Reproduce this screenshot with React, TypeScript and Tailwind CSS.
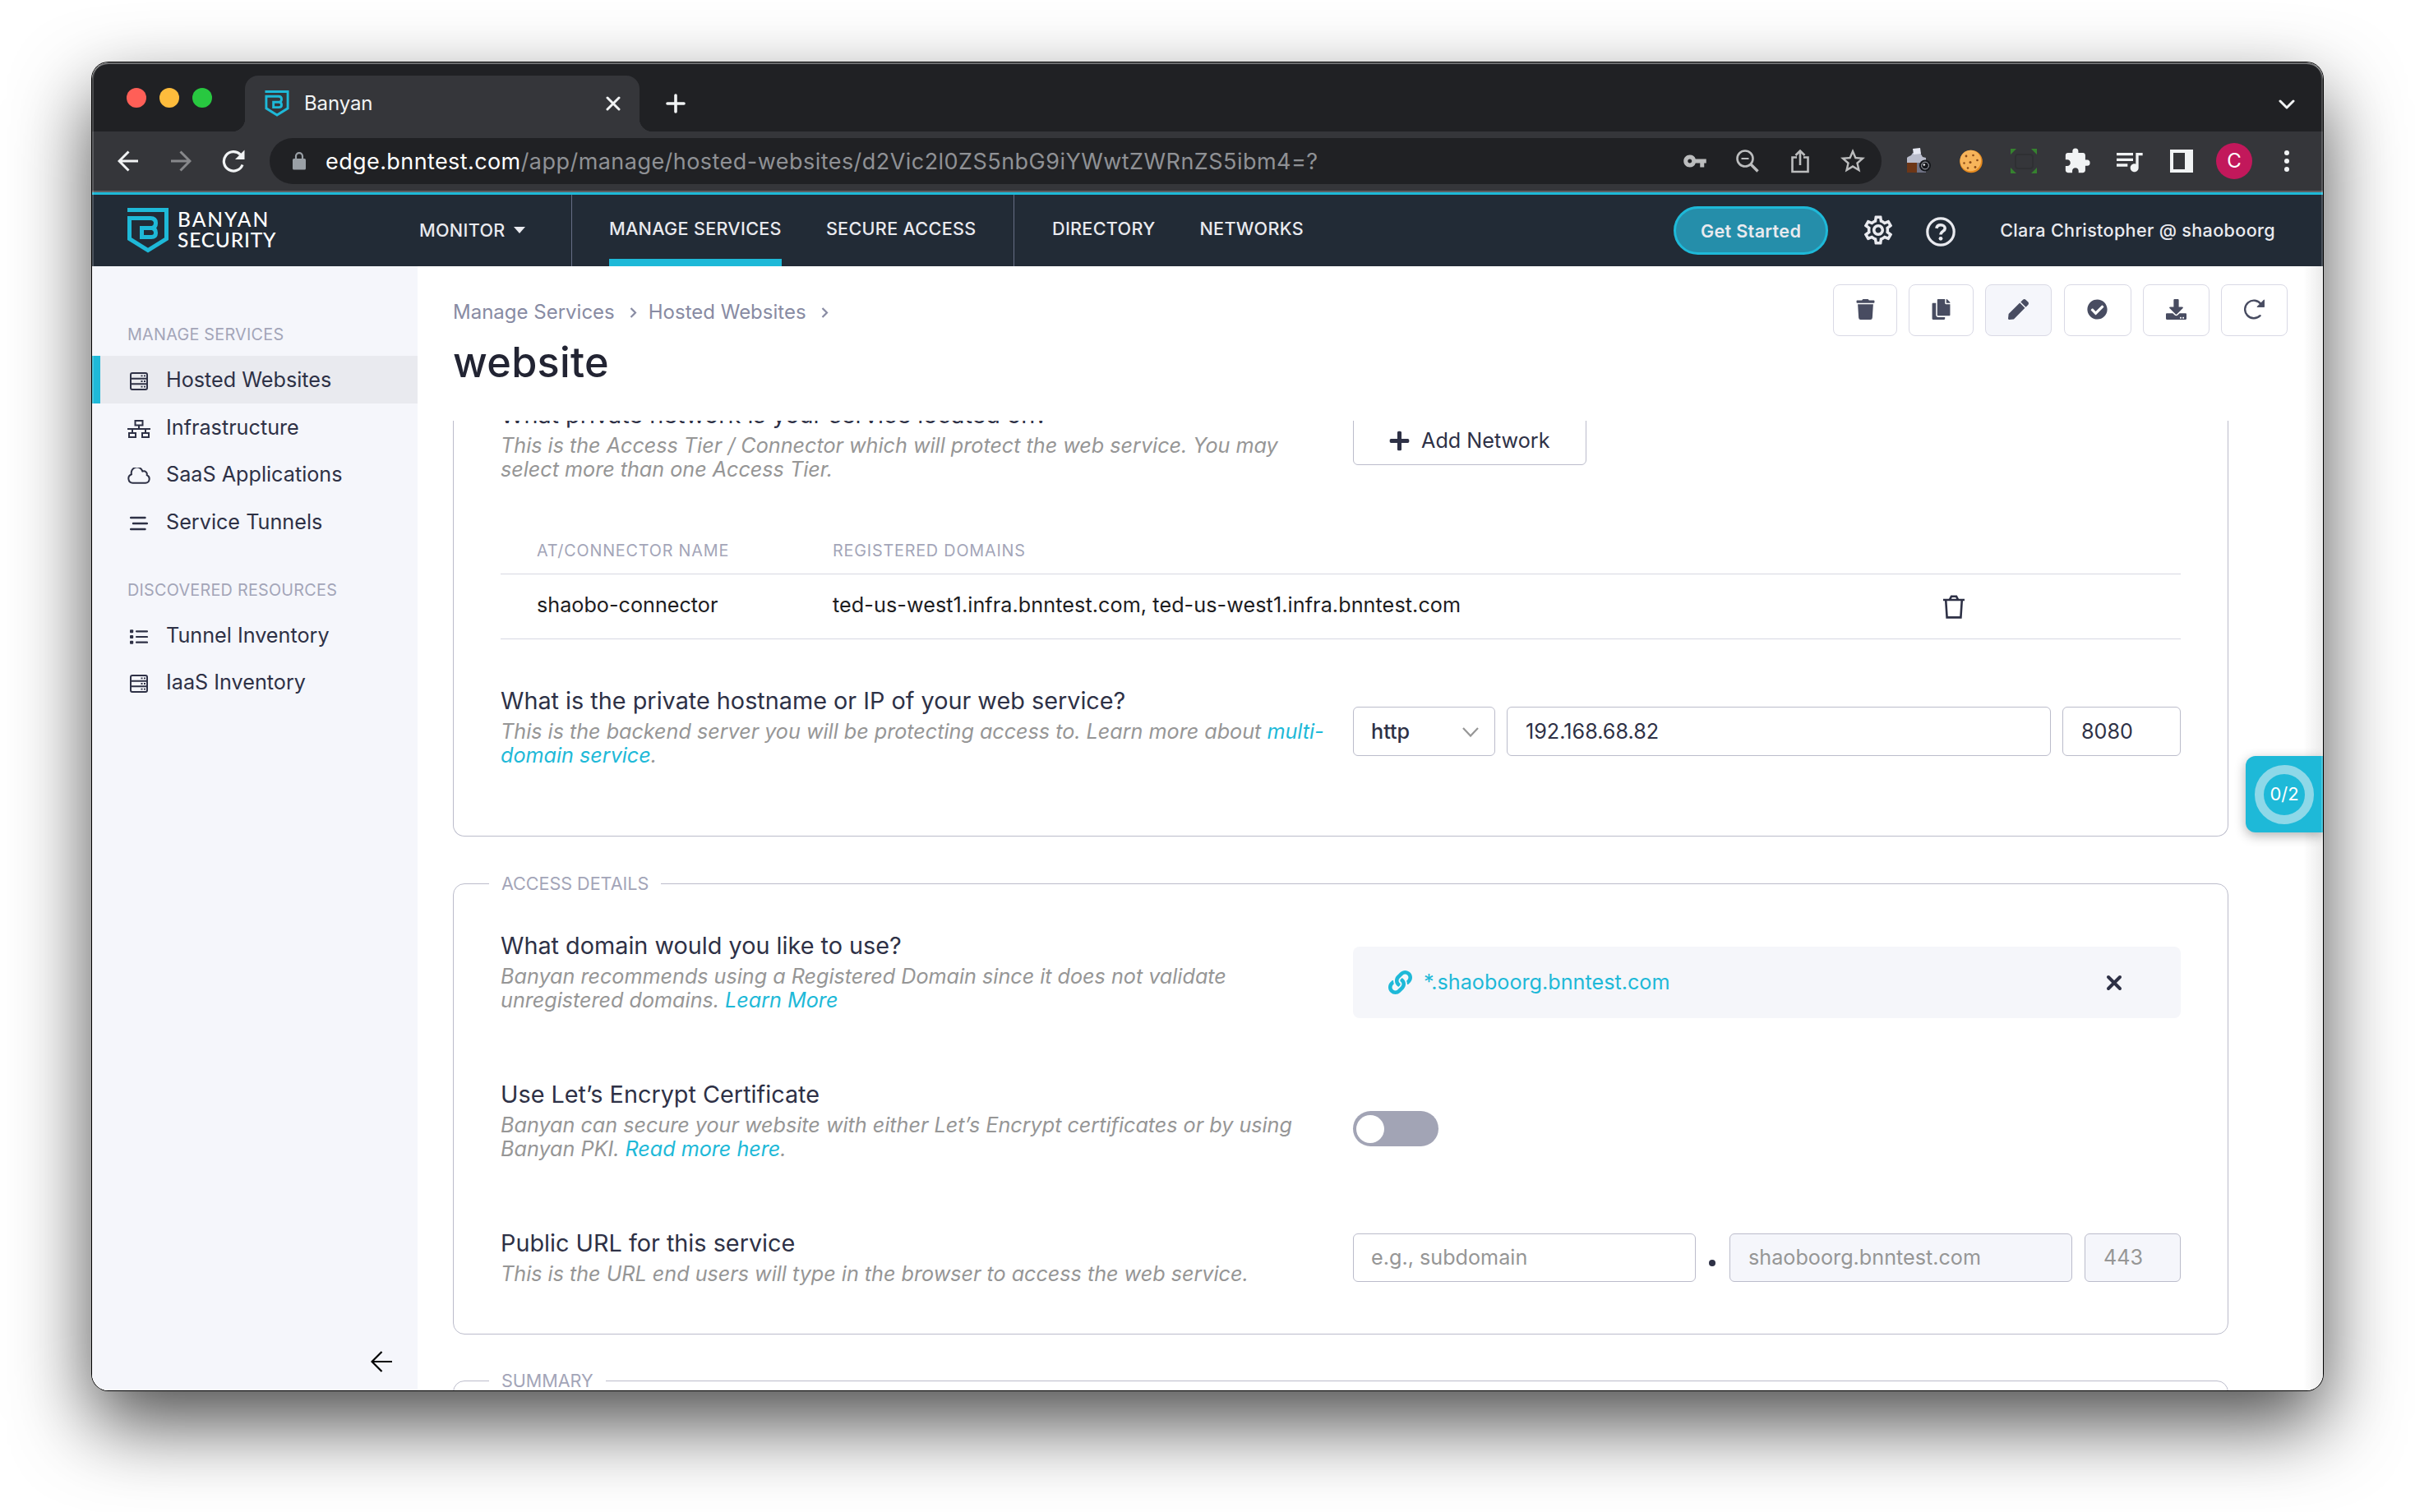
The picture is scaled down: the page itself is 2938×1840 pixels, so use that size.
import type { ReactNode } from "react";
import { FaCheckCircle, FaCopy, FaDownload, FaLink, FaPen, FaPlus, FaTrash } from "react-icons/fa";
import { MdExtension, MdOutlineSettings, MdQueueMusic, MdStarBorder, MdVpnKey } from "react-icons/md";

function Shield({ className }: { className: string }) {
  return (
    <svg viewBox="0 0 50 55" className={className} fill="none" stroke="#1eb9d8">
      <path d="M0 2.5H47.5V37.5L25 51.5L2.5 37.5V12.5H28Q34.5 12.5 34.5 18.5Q34.5 23.5 30 24.5Q34.5 25.5 34.5 30.5Q34.5 35.5 29 35.5H17.5V24.5H30" strokeWidth="5" />
    </svg>
  );
}

function ServerIcon() {
  return (
    <svg viewBox="0 0 22 22" className="size-[22px]" fill="none" stroke="#2e3146" strokeWidth="2">
      <rect x="1" y="1" width="20" height="20" rx="2" />
      <path d="M1 7.7H21M1 14.3H21" />
      <path d="M13.5 4.4H15.5M17 4.4H19M13.5 11H15.5M17 11H19M13.5 17.6H15.5M17 17.6H19" strokeWidth="1.8" />
    </svg>
  );
}

function NetworkIcon() {
  return (
    <svg viewBox="0 0 28 22" className="h-[22px] w-7" fill="none" stroke="#2e3146" strokeWidth="2">
      <path d="M9.5 1H18.5V6.5H9.5ZM2 16H10V21H2ZM18 16H26V21H18ZM0 11H28M14 6.5V11M6 11V16M22 11V16" />
    </svg>
  );
}

function CloudIcon() {
  return (
    <svg viewBox="0 0 28 20" className="h-5 w-7" fill="none" stroke="#2e3146" strokeWidth="2" strokeLinejoin="round">
      <path d="M6.5 18.8H22A5 5 0 0 0 23.6 9.2A3.8 3.8 0 0 0 18.3 4.6A6.9 6.9 0 0 0 5 8.3A5.4 5.4 0 0 0 6.5 18.8Z" />
    </svg>
  );
}

function TunnelIcon() {
  return (
    <svg viewBox="0 0 22 18" className="h-[18px] w-[22px]" stroke="#2e3146" strokeWidth="2.4" strokeLinecap="round">
      <path d="M1.1 2H18.5M4 9H20.9M1.1 16H18.5" />
    </svg>
  );
}

function ListIcon() {
  return (
    <svg viewBox="0 0 22 18" className="h-[18px] w-[22px]" fill="#2e3146" stroke="#2e3146">
      <path d="M8 2.3H21M8 9H21M8 15.7H21" strokeWidth="2.2" strokeLinecap="round" />
      <rect x="0" y="0.3" width="4.2" height="4" rx="1" stroke="none" />
      <rect x="0" y="7" width="4.2" height="4" rx="1" stroke="none" />
      <rect x="0" y="13.7" width="4.2" height="4" rx="1" stroke="none" />
    </svg>
  );
}

function CameraIcon() {
  return (
    <svg viewBox="0 0 30 32" className="h-8 w-[30px]">
      <path d="M2 11L6 9L8 6H17L20 11L24 12V28H1V12Z" fill="#b9bccb" />
      <path d="M8 1L17 0L18 7L9 8Z" fill="#e6e8f2" />
      <path d="M1 18H13V30H1Z" fill="#6d3617" />
      <path d="M13 18H24V30H13Z" fill="#6f7284" />
      <circle cx="23" cy="21.5" r="7" fill="#15171b" />
      <circle cx="23" cy="21.5" r="4.4" fill="none" stroke="#aeb2bb" strokeWidth="1" />
      <circle cx="21.8" cy="20.5" r="1.3" fill="#e8eaee" />
    </svg>
  );
}

function CookieIcon() {
  return (
    <svg viewBox="0 0 30 30" className="size-[30px]">
      <circle cx="15" cy="15.5" r="13.8" fill="#e58a1f" />
      <circle cx="14.3" cy="14.5" r="12.8" fill="#f7b45a" />
      <g fill="#8a4a17">
        <circle cx="9" cy="9" r="1.4" />
        <circle cx="17.5" cy="8" r="1.3" />
        <circle cx="22.5" cy="14" r="1.3" />
        <circle cx="14" cy="16.5" r="1.5" />
        <circle cx="6.5" cy="17.5" r="1.2" />
        <circle cx="11" cy="23.5" r="1.3" />
        <circle cx="20" cy="22.5" r="1.4" />
      </g>
    </svg>
  );
}

const sidebarGroups = [
  {
    label: "MANAGE SERVICES",
    items: [
      { name: "Hosted Websites", icon: <ServerIcon />, active: true },
      { name: "Infrastructure", icon: <NetworkIcon />, active: false },
      { name: "SaaS Applications", icon: <CloudIcon />, active: false },
      { name: "Service Tunnels", icon: <TunnelIcon />, active: false },
    ],
  },
  {
    label: "DISCOVERED RESOURCES",
    items: [
      { name: "Tunnel Inventory", icon: <ListIcon />, active: false },
      { name: "IaaS Inventory", icon: <ServerIcon />, active: false },
    ],
  },
];

function TabStrip() {
  return (
    <div className="flex h-[84px] items-end bg-[#202124] pl-[42px] pr-[34px]">
      <div className="flex gap-4 self-start pt-[31px]">
        <span className="size-6 rounded-full bg-[#ff5f57]" />
        <span className="size-6 rounded-full bg-[#febc3c]" />
        <span className="size-6 rounded-full bg-[#28c840]" />
      </div>
      <div className="ml-[24px] flex items-end">
        <span className="size-4 bg-[radial-gradient(circle_at_0_0,transparent_16px,#35363a_16.5px)]" />
        <div className="flex h-[68px] w-[480px] items-center rounded-t-[16px] bg-[#35363a] pl-6 pr-[23px]">
          <Shield className="h-8 w-[30px]" />
          <span className="ml-[18px] text-[24px] leading-8 tracking-[-0.1px] text-[#f1f3f4]">Banyan</span>
          <svg viewBox="0 0 18 18" className="ml-auto size-[18px]" stroke="#f1f3f4" strokeWidth="3" strokeLinecap="round">
            <path d="M2 2L16 16M16 2L2 16" />
          </svg>
        </div>
        <span className="size-4 bg-[radial-gradient(circle_at_100%_0,transparent_16px,#35363a_16.5px)]" />
      </div>
      <svg viewBox="0 0 24 24" className="mb-[22px] ml-4 size-6" stroke="#f1f3f4" strokeWidth="3.6" strokeLinecap="round">
        <path d="M12 2V22M2 12H22" />
      </svg>
      <svg viewBox="0 0 20 12" className="mb-[27px] ml-auto h-3 w-5" fill="none" stroke="#f1f3f4" strokeWidth="3" strokeLinecap="round" strokeLinejoin="round">
        <path d="M2 2L10 10L18 2" />
      </svg>
    </div>
  );
}

function Toolbar() {
  return (
    <div className="flex h-[74px] items-center border-b-2 border-[#5f6064] bg-[#35363a] pl-[31px] pr-[36px]">
      <svg viewBox="0 0 26 26" className="size-[26px]" fill="none" stroke="#f1f3f4" strokeWidth="3">
        <path d="M25 13H3M13.5 1.5L2 13L13.5 24.5" />
      </svg>
      <svg viewBox="0 0 26 26" className="ml-[38px] size-[26px]" fill="none" stroke="#87888b" strokeWidth="3">
        <path d="M1 13H23M12.5 1.5L24 13L12.5 24.5" />
      </svg>
      <svg viewBox="0 0 28 28" className="ml-[37px] size-7" fill="none" stroke="#f1f3f4" strokeWidth="3.2">
        <path d="M25 18.5A11.7 11.7 0 1 1 22.5 6.2" />
        <path d="M27.5 0.5V12H16Z" fill="#f1f3f4" stroke="none" />
      </svg>
      <div className="ml-[30px] flex h-14 w-[1961px] items-center rounded-full bg-[#202124] pl-[28px] pr-[17px]">
        <svg viewBox="0 0 16 22" className="mb-px h-[22px] w-4" fill="none" stroke="#9aa0a6">
          <path d="M4 9V5.2A4 4 0 0 1 12 5.2V9" strokeWidth="2.2" />
          <rect x="0" y="8" width="16" height="13.5" rx="1.6" fill="#9aa0a6" stroke="none" />
        </svg>
        <span className="ml-[24px] mt-px text-[27px] leading-8 tracking-[0.46px] text-[#8f9195]">
          <span className="tracking-[0.4px] text-white">edge.bnntest.com</span>
          /app/manage/hosted-websites/d2Vic2l0ZS5nbG9iYWwtZWRnZS5ibm4=?
        </span>
        <div className="ml-auto flex items-center text-[#bcbdbe]">
          <MdVpnKey className="size-[30px]" />
          <svg viewBox="0 0 28 28" className="ml-[35px] size-7" fill="none" stroke="currentColor" strokeWidth="2.6">
            <circle cx="11" cy="11" r="9.5" />
            <path d="M6.5 11H15.5" strokeWidth="2" />
            <path d="M18 18L26.5 26.5" strokeWidth="3.4" />
          </svg>
          <svg viewBox="0 0 24 30" className="ml-[38px] h-[30px] w-6" fill="none" stroke="currentColor" strokeWidth="2.6">
            <path d="M8 10.5H2.5V28H21.5V10.5H16M12 20V3M6.5 8L12 2.5L17.5 8" />
          </svg>
          <MdStarBorder className="ml-[34px] size-9" />
        </div>
      </div>
      <div className="ml-[30px] flex items-center text-[#f1f3f4]">
        <CameraIcon />
        <span className="ml-[34px]">
          <CookieIcon />
        </span>
        <svg viewBox="0 0 32 30" className="ml-[33px] h-[30px] w-8" fill="#36822f">
          <path d="M0 0H7L0 7ZM32 0V7L25 0ZM0 30V23L7 30ZM32 30H25L32 23Z" />
          <rect x="6" y="7" width="21" height="17" rx="3" fill="none" stroke="#2f3033" strokeWidth="2" />
        </svg>
        <MdExtension className="ml-[32px] size-[34px]" />
        <MdQueueMusic className="ml-[26px] size-[40px]" />
        <svg viewBox="0 0 28 28" className="ml-[30px] size-7" fill="currentColor">
          <path fillRule="evenodd" d="M0 0H28V28H0ZM4 4V24H18V4Z" />
        </svg>
        <span className="ml-7 flex size-11 items-center justify-center rounded-full bg-[#c2185b] text-[24px] text-white">C</span>
        <svg viewBox="0 0 6 26" className="ml-[39px] h-[26px] w-1.5" fill="currentColor">
          <circle cx="3" cy="3" r="3" />
          <circle cx="3" cy="13" r="3" />
          <circle cx="3" cy="23" r="3" />
        </svg>
      </div>
    </div>
  );
}

function NavBar() {
  return (
    <div className="flex h-[90px] border-t-[3px] border-[#1eb9d8] bg-[#222b36] text-[21.6px] font-medium leading-[30px] tracking-[0.3px] text-[#e9eaef]">
      <div className="flex w-[398px] gap-[11px] pl-[43px] pt-[16px]">
        <Shield className="h-[55px] w-[50px]" />
        <div className="mt-px font-['Lato','Inter',sans-serif] text-[24.5px] leading-[25px] text-white">
          <div className="font-medium tracking-[2px]">BANYAN</div>
          <div className="tracking-[0.8px]">SECURITY</div>
        </div>
      </div>
      <div className="flex w-[186px] border-r border-[#666d85] pt-7">
        <span>MONITOR</span>
        <svg viewBox="0 0 14 8" className="ml-[10px] mt-[11px] h-2 w-3.5" fill="currentColor">
          <path d="M0 0H14L7 8Z" />
        </svg>
      </div>
      <div className="flex w-[538px] gap-[54px] border-r border-[#666d85] pl-[45px]">
        <div className="border-b-[9px] border-[#1eb9d8] pt-[26px] whitespace-nowrap">MANAGE SERVICES</div>
        <div className="pt-[26px] whitespace-nowrap">SECURE ACCESS</div>
      </div>
      <div className="flex gap-[54px] pl-[46px] pt-[26px]">
        <span>DIRECTORY</span>
        <span>NETWORKS</span>
      </div>
      <div className="ml-auto flex pr-[58px] pt-[14px]">
        <button className="h-[59px] w-[188px] rounded-full border-[3px] border-[#1eb9d8] bg-[#258eaa] font-semibold">Get Started</button>
        <MdOutlineSettings className="ml-[40px] mt-[8px] size-[42px]" />
        <svg viewBox="0 0 36 36" className="ml-[37px] mt-[13px] size-9" fill="none" stroke="currentColor">
          <circle cx="18" cy="18" r="16.2" strokeWidth="3.2" />
          <path d="M12.8 13.8C13.4 11 15 9.8 18 9.8C21.3 9.8 23.2 11.6 23.2 14C23.2 17.6 18 17.2 18 21.6" strokeWidth="3.6" />
          <circle cx="18" cy="26.3" r="2.4" fill="currentColor" stroke="none" />
        </svg>
        <span className="ml-[54px] mt-[14px] whitespace-nowrap tracking-[0.33px]">Clara Christopher @ shaoboorg</span>
      </div>
    </div>
  );
}

function Sidebar() {
  return (
    <aside className="flex w-[396px] flex-col bg-[#f5f6fb]">
      <div className="pt-[67px]">
        {sidebarGroups.map((group) => (
          <div key={group.label} className="mb-[38px]">
            <div className="mb-[10px] h-[32px] pl-[43px] text-[19.8px] leading-[33px] tracking-[0.25px] text-[#a3a5b8]">{group.label}</div>
            {group.items.map((item) => (
              <div
                key={item.name}
                className={
                  item.active
                    ? "flex h-[57.7px] items-center border-l-[10px] border-[#1eb9d8] bg-[#e9eaef] pl-[29px]"
                    : "flex h-[57.7px] items-center pl-[39px]"
                }
              >
                <span className="flex w-9 justify-center pt-1">{item.icon}</span>
                <span className="ml-[15px] text-[25.2px] leading-8 text-[#2e3146]">{item.name}</span>
              </div>
            ))}
          </div>
        ))}
      </div>
      <svg viewBox="0 0 26 26" className="mb-[22px] ml-[339px] mt-auto size-[26px]" fill="none" stroke="#000" strokeWidth="2.2">
        <path d="M26 13H2M13.5 1L1.5 13L13.5 25" />
      </svg>
    </aside>
  );
}

function ActionButtons() {
  const base = "flex h-[63px] items-center justify-center rounded-[8px] border border-[#d9d9e5] pb-[3px] text-[#484c61] text-[25px]";
  return (
    <div className="mt-[22px] flex gap-[14.2px]">
      <button className={`${base} w-[78px]`}><FaTrash /></button>
      <button className={`${base} w-[79px]`}><FaCopy /></button>
      <button className={`${base} w-[81px] bg-[#f5f6fb]`}><FaPen /></button>
      <button className={`${base} w-[82px]`}><FaCheckCircle /></button>
      <button className={`${base} w-[81px]`}><FaDownload /></button>
      <button className={`${base} w-[81px]`}>
        <svg viewBox="0 0 25 25" className="size-[25px]" fill="none" stroke="currentColor">
          <path d="M19.5 20.2A10.8 10.8 0 1 1 20.6 6" strokeWidth="2.4" strokeLinecap="round" />
          <path d="M24.6 0.8V9.4H16Z" fill="currentColor" />
        </svg>
      </button>
    </div>
  );
}

function Crumb({ children }: { children: ReactNode }) {
  return (
    <span className="flex items-center">
      {children}
      <svg viewBox="0 0 9 13" className="ml-[18px] mt-px h-[13px] w-[9px]" fill="none" stroke="currentColor" strokeWidth="2.2">
        <path d="M1.5 1L7 6.5L1.5 12" />
      </svg>
    </span>
  );
}

function Question({ title, children }: { title: string; children: ReactNode }) {
  return (
    <div className="w-[1037px] shrink-0 pt-px">
      <h3 className="text-[28.8px] leading-9 text-[#2e3146]">{title}</h3>
      <p className="mt-[5px] w-[1008px] text-[25.2px] italic leading-[28.8px] tracking-[-0.02px] text-[#969696]">{children}</p>
    </div>
  );
}

function Link({ children }: { children: ReactNode }) {
  return <a className="text-[#1eb9d8]">{children}</a>;
}

// pulled back by its own side padding so the label lines up with the fields
function Legend({ children }: { children: ReactNode }) {
  return <legend className="-ml-[14px] px-[15px] text-[21.6px] leading-6 tracking-[-0.05px] text-[#a3a5b8]">{children}</legend>;
}

function BackendCard() {
  return (
    <div className="h-[506px] shrink-0 rounded-b-[14px] border border-t-0 border-[#bbbccb] px-[57px]">
      <div className="-mt-[26px] flex h-[98px]">
        <Question title="What private network is your service located on?">
          This is the Access Tier / Connector which will protect the web service. You may select more than one Access Tier.
        </Question>
        <button className="mt-[20px] flex h-[60px] w-[284px] items-center rounded-[6px] border border-[#bbbccb] pl-[42px] pt-px text-[25.2px] text-[#2e3146]">
          <FaPlus className="size-[27px]" />
          <span className="ml-[13px]">Add Network</span>
        </button>
      </div>
      <div className="mt-[57px] flex h-[58px] items-center border-b border-[#d7d8e2] pl-11 pt-[2px] text-[19.8px] tracking-[0.8px] text-[#a3a5b8]">
        <span className="w-[360px]">AT/CONNECTOR NAME</span>
        <span>REGISTERED DOMAINS</span>
      </div>
      <div className="flex h-[79px] items-center border-b border-[#d7d8e2] pb-[2px] pl-11 text-[25.2px] text-[#1d1d1f]">
        <span className="w-[360px]">shaobo-connector</span>
        <span className="tracking-[0.07px]">ted-us-west1.infra.bnntest.com, ted-us-west1.infra.bnntest.com</span>
        <svg viewBox="0 0 26 29" className="ml-auto mr-[263px] mt-[2px] h-[29px] w-[26px]" fill="none" stroke="#2e3146" strokeWidth="2.6">
          <path d="M0 6H26M8 5.5L10 1.8H16L18 5.5M3.2 6L4.6 27.4H21.4L22.8 6" />
        </svg>
      </div>
      <div className="mt-[56px] flex">
        <Question title="What is the private hostname or IP of your web service?">
          This is the backend server you will be protecting access to. Learn more about <Link>multi-domain service</Link>.
        </Question>
        <div className="mt-[26px] flex h-[60px] flex-1 gap-[14px] text-[25.2px] text-[#2e3146]">
          <div className="flex w-[173px] items-center justify-between rounded-[6px] border border-[#bbbccb] pl-[21px] pr-[19px] pt-px font-medium">
            http
            <svg viewBox="0 0 20 12" className="h-3 w-5" fill="none" stroke="#969696" strokeWidth="2.2">
              <path d="M1 1L10 10.5L19 1" />
            </svg>
          </div>
          <div className="flex w-[662px] items-center rounded-[6px] border border-[#bbbccb] pl-[22px] pt-px">192.168.68.82</div>
          <div className="flex flex-1 items-center rounded-[6px] border border-[#bbbccb] pl-[22px] pt-px">8080</div>
        </div>
      </div>
    </div>
  );
}

function AccessDetails() {
  return (
    <fieldset className="mt-[45px] h-[561px] shrink-0 rounded-[14px] border border-[#bbbccb] px-[57px]">
      <Legend>ACCESS DETAILS</Legend>
      <div className="mt-[45px] flex h-[181px]">
        <Question title="What domain would you like to use?">
          Banyan recommends using a Registered Domain since it does not validate unregistered domains. <Link>Learn More</Link>
        </Question>
        <div className="mt-[20px] flex h-[87px] flex-1 items-center rounded-[8px] bg-[#f5f6fa] pl-[43px] pr-[71px] text-[25.2px] text-[#1eb9d8]">
          <FaLink className="size-[29px]" />
          <span className="ml-[14px]">*.shaoboorg.bnntest.com</span>
          <svg viewBox="0 0 20 20" className="ml-auto size-5" stroke="#2e3146" strokeWidth="4" strokeLinecap="round">
            <path d="M3 3L17 17M17 3L3 17" />
          </svg>
        </div>
      </div>
      <div className="flex h-[181px]">
        <Question title="Use Let’s Encrypt Certificate">
          Banyan can secure your website with either Let’s Encrypt certificates or by using Banyan PKI. <Link>Read more here</Link>.
        </Question>
        <div className="mt-[39px] flex h-[43px] w-[104px] items-center rounded-full bg-[#a2a4b5] pl-1">
          <span className="size-[34px] rounded-full bg-white" />
        </div>
      </div>
      <div className="flex">
        <Question title="Public URL for this service">
          This is the URL end users will type in the browser to access the web service.
        </Question>
        <div className="mt-[7px] flex h-[59px] flex-1 text-[25.2px] text-[#969696]">
          <div className="flex w-[417px] items-center rounded-[6px] border border-[#bbbccb] pl-[21px] pt-px">e.g., subdomain</div>
          <span className="ml-4 mt-[32px] size-2 rounded-full bg-[#2e3146]" />
          <div className="ml-[17px] flex w-[417px] items-center rounded-[6px] border border-[#bbbccb] bg-[#f5f6fb] pl-[22px] pt-px">shaoboorg.bnntest.com</div>
          <div className="ml-[15px] flex flex-1 items-center rounded-[6px] border border-[#bbbccb] bg-[#f5f6fb] pl-[22px] pt-px">443</div>
        </div>
      </div>
    </fieldset>
  );
}

export default function App() {
  return (
    <div className="h-[1840px] w-[2938px] overflow-hidden bg-white pl-[112px] pt-[76px] font-['Inter','Liberation_Sans',sans-serif]">
      <div className="h-[1616px] w-[2714px] rounded-[20px] shadow-[0_0_0_1px_#000,0_40px_95px_rgba(0,0,0,0.7)]">
        <div className="relative flex h-full flex-col overflow-hidden rounded-[20px] bg-white">
          <TabStrip />
          <Toolbar />
          <NavBar />
          <div className="flex min-h-0 flex-1">
            <Sidebar />
            <main className="flex min-w-0 flex-1 flex-col">
              <header className="flex h-[188px] shrink-0 justify-between pl-[43px] pr-[43px]">
                <div>
                  <div className="mt-[40px] flex h-8 gap-[14px] text-[24px] leading-8 text-[#888ba3]">
                    <Crumb>Manage Services</Crumb>
                    <Crumb>Hosted Websites</Crumb>
                  </div>
                  <h1 className="mt-[15px] text-[50.4px] font-medium leading-[60px] tracking-[0.3px] text-[#222433]">website</h1>
                </div>
                <ActionButtons />
              </header>
              <div className="flex min-h-0 flex-1 flex-col overflow-hidden pl-[43px] pr-[115px]">
                <BackendCard />
                <AccessDetails />
                <fieldset className="mt-[44px] h-40 shrink-0 rounded-[14px] border border-[#bbbccb] px-[57px]">
                  <Legend>SUMMARY</Legend>
                </fieldset>
              </div>
            </main>
          </div>
          {/* soft edge down the right side of the page */}
          <div className="absolute bottom-0 right-0 top-[248px] w-6 bg-gradient-to-r from-transparent to-black/8" />
          <div className="absolute right-0 top-[844px] flex h-[93px] w-[94px] items-center rounded-l-[12px] bg-[#1eb9d8] pl-[11px] shadow-[0_4px_14px_rgba(0,0,0,0.3)]">
            <div className="flex size-[72px] items-center justify-center rounded-full border-[11px] border-[#8ed8e8] text-[22px] text-white">0/2</div>
          </div>
          <div className="pointer-events-none absolute inset-0 rounded-[20px] shadow-[inset_0_2px_0_rgba(255,255,255,0.35),inset_2px_0_0_rgba(255,255,255,0.2),inset_-2px_0_0_rgba(255,255,255,0.2)]" />
        </div>
      </div>
    </div>
  );
}
